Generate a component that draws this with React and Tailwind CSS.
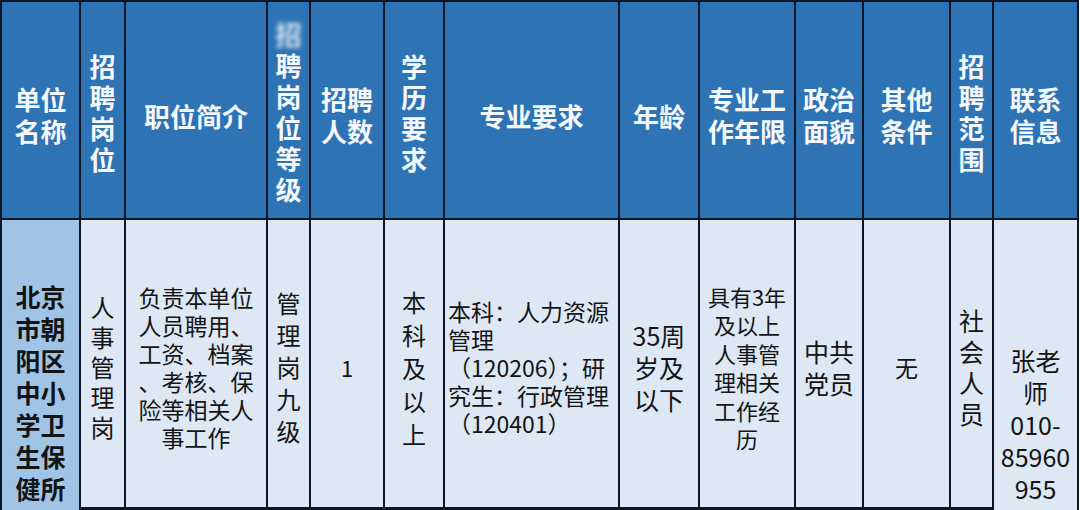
export default function App() {
  const head =
    "bg-[#2e74b5] text-[#f4f7fb] font-bold text-[26px] flex flex-col items-center justify-center text-center";
  const body =
    "bg-[#dde8f4] text-[#141414] flex flex-col items-center justify-center text-center h-[287px] self-start pt-[7px]";

  return (
    <div className="w-[1080px] h-[510px] overflow-hidden bg-white font-['Noto_Sans_CJK_SC','Noto_Sans',sans-serif]">
      <div className="w-[1079px] h-[510px] bg-[#0c1626] pl-[2px] pr-[2px] pt-[2px] grid grid-cols-[77px_43px_140px_41px_72px_58px_173px_78px_94px_66px_85px_41px_83px] grid-rows-[216px_290px] gap-[2px]">
        {/* Header row */}
        <div className={`${head} leading-[32px] pt-[10px]`}>
          <span>单位</span>
          <span>名称</span>
        </div>
        <div className={`${head} leading-[31px] pt-[4px]`}>
          <span>招</span>
          <span>聘</span>
          <span>岗</span>
          <span>位</span>
        </div>
        <div className={`${head} pt-[10px]`}>职位简介</div>
        <div className={`${head} leading-[31px] pt-[2px]`}>
          <span className="blur-[2px] opacity-90">招</span>
          <span>聘</span>
          <span>岗</span>
          <span>位</span>
          <span>等</span>
          <span>级</span>
        </div>
        <div className={`${head} leading-[32px] pt-[10px]`}>
          <span>招聘</span>
          <span>人数</span>
        </div>
        <div className={`${head} leading-[31px] pt-[4px]`}>
          <span>学</span>
          <span>历</span>
          <span>要</span>
          <span>求</span>
        </div>
        <div className={`${head} pt-[10px]`}>专业要求</div>
        <div className={`${head} pt-[10px]`}>年龄</div>
        <div className={`${head} leading-[32px] pt-[10px]`}>
          <span>专业工</span>
          <span>作年限</span>
        </div>
        <div className={`${head} leading-[32px] pt-[10px]`}>
          <span>政治</span>
          <span>面貌</span>
        </div>
        <div className={`${head} leading-[32px] pt-[10px]`}>
          <span>其他</span>
          <span>条件</span>
        </div>
        <div className={`${head} leading-[31px] pt-[4px]`}>
          <span>招</span>
          <span>聘</span>
          <span>范</span>
          <span>围</span>
        </div>
        <div className={`${head} leading-[32px] pt-[10px]`}>
          <span>联系</span>
          <span>信息</span>
        </div>

        {/* Body row */}
        <div className="bg-[#a0c4e6] text-[#141414] font-bold text-[25px] leading-[32px] flex flex-col items-center pt-[60px] text-center">
          <span>北京</span>
          <span>市朝</span>
          <span>阳区</span>
          <span>中小</span>
          <span>学卫</span>
          <span>生保</span>
          <span>健所</span>
        </div>
        <div className={`${body} text-[24px] leading-[30px]`}>
          <span>人</span>
          <span>事</span>
          <span>管</span>
          <span>理</span>
          <span>岗</span>
        </div>
        <div className={`${body} text-[23px] leading-[28px]`}>
          <span>负责本单位</span>
          <span>人员聘用、</span>
          <span>工资、档案</span>
          <span>、考核、保</span>
          <span>险等相关人</span>
          <span>事工作</span>
        </div>
        <div className={`${body} text-[24px] leading-[32px]`}>
          <span>管</span>
          <span>理</span>
          <span>岗</span>
          <span>九</span>
          <span>级</span>
        </div>
        <div className={`${body} text-[22px]`}>1</div>
        <div className={`${body} text-[24px] leading-[33px]`}>
          <span>本</span>
          <span>科</span>
          <span>及</span>
          <span>以</span>
          <span>上</span>
        </div>
        <div className={`${body} !items-start !text-left pl-[3px] text-[23px] leading-[28px] whitespace-nowrap`}>
          <span>本科：人力资源</span>
          <span>管理</span>
          <span>（120206）；研</span>
          <span>究生：行政管理</span>
          <span>（120401）</span>
        </div>
        <div className={`${body} text-[25px] leading-[32px]`}>
          <span>35周</span>
          <span>岁及</span>
          <span>以下</span>
        </div>
        <div className={`${body} text-[22px] leading-[28.5px]`}>
          <span>具有3年</span>
          <span>及以上</span>
          <span>人事管</span>
          <span>理相关</span>
          <span>工作经</span>
          <span>历</span>
        </div>
        <div className={`${body} text-[25px] leading-[32px]`}>
          <span>中共</span>
          <span>党员</span>
        </div>
        <div className={`${body} text-[23px]`}>无</div>
        <div className={`${body} text-[25px] leading-[31px]`}>
          <span>社</span>
          <span>会</span>
          <span>人</span>
          <span>员</span>
        </div>
        <div className="bg-[#dde8f4] text-[#141414] text-[25px] leading-[32px] flex flex-col items-center pt-[124px] text-center">
          <span>张老</span>
          <span>师</span>
          <span>010-</span>
          <span>85960</span>
          <span>955</span>
        </div>
      </div>
    </div>
  );
}
